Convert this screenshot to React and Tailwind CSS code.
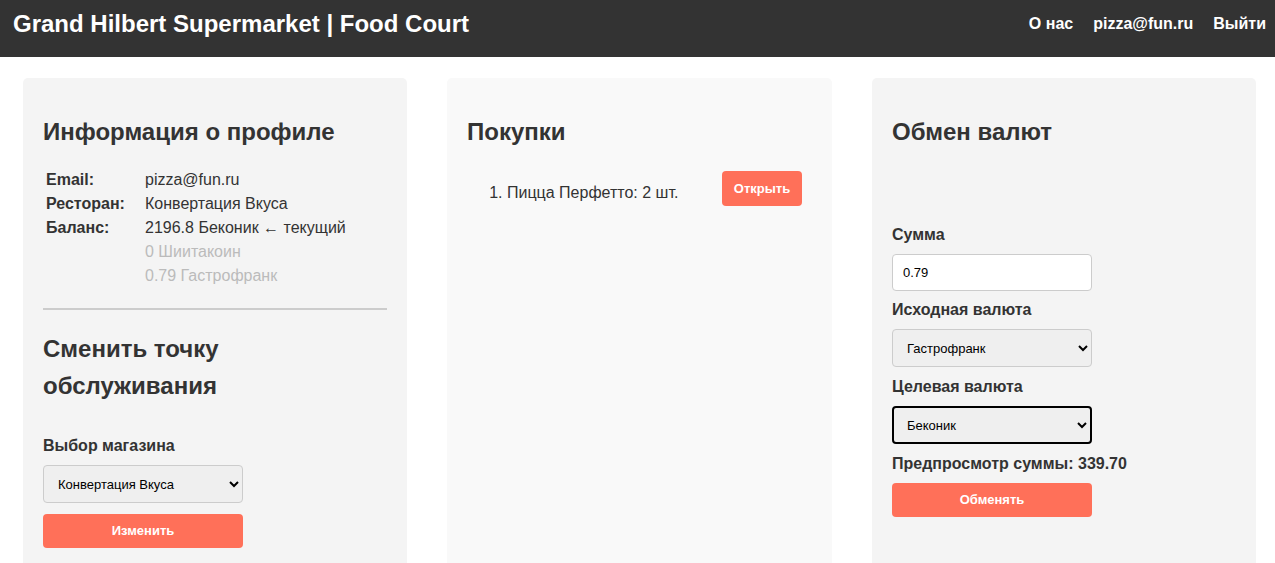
import React from 'react';

/**
 * Food court profile page
 * Header bar + three cards: profile, purchases, currency exchange
 */

const font = { fontFamily: '"Liberation Sans", Arial, sans-serif' };

const Header = () => (
  <header className="bg-[#333333] h-[57px] flex items-center justify-between pl-[13px] pr-[9px] pb-[10px] text-white">
    <h1 className="text-[24px] font-bold leading-none">Grand Hilbert Supermarket | Food Court</h1>
    <nav className="flex items-center gap-[20px] text-[16px] font-bold">
      <a href="#">О нас</a>
      <a href="#">pizza@fun.ru</a>
      <a href="#">Выйти</a>
    </nav>
  </header>
);

const Card = ({ light, wide, children }) => (
  <section
    className={`rounded-[5px] p-[20px] ${wide ? 'w-[385px]' : 'w-[384px]'} ${light ? 'bg-[#f9f9f9]' : 'bg-[#f4f4f4]'}`}
  >
    {children}
  </section>
);

const Title = ({ children, className = '' }) => (
  <h2 className={`text-[24px] leading-[36px] font-bold text-[#333333] ${className}`}>{children}</h2>
);

const Label = ({ children, className = '' }) => (
  <div className={`text-[16px] leading-[24px] font-bold text-[#333333] ${className}`}>{children}</div>
);

const Select = ({ value, options, focused }) => (
  <select
    defaultValue={value}
    className={`block w-[200px] h-[38px] pr-[4px] text-[13px] text-black bg-[#efefef] rounded-[4px] ${
      focused ? 'pl-[9px] border-2 border-black' : 'pl-[10px] border border-[#cccccc]'
    }`}
  >
    {options.map((o) => (
      <option key={o}>{o}</option>
    ))}
  </select>
);

const Button = ({ children, className = '' }) => (
  <button className={`h-[34px] rounded-[4px] bg-[#ff7059] text-white text-[13px] font-bold ${className}`}>
    {children}
  </button>
);

const ProfileCard = () => (
  <Card>
    <Title className="mt-[16px]">Информация о профиле</Title>
    <div className="mt-[18px] pl-[3px] text-[16px] leading-[24px] text-[#333333] grid grid-cols-[99px_1fr]">
      <span className="font-bold">Email:</span>
      <span>pizza@fun.ru</span>
      <span className="font-bold">Ресторан:</span>
      <span>Конвертация Вкуса</span>
      <span className="font-bold">Баланс:</span>
      <span>2196.8 Беконик ← текущий</span>
      <span />
      <span className="text-[#bbbbbb]">0 Шиитакоин</span>
      <span />
      <span className="text-[#bbbbbb]">0.79 Гастрофранк</span>
    </div>
    <hr className="mt-[20px] border-0 h-[2px] bg-[#cccccc]" />
    <Title className="mt-[20px] leading-[37px]">
      Сменить точку
      <br />
      обслуживания
    </Title>
    <Label className="mt-[30px]">Выбор магазина</Label>
    <div className="mt-[7px]">
      <Select value="Конвертация Вкуса" options={['Конвертация Вкуса', 'Пицца Перфетто']} />
    </div>
    <Button className="mt-[11px] w-[200px]">Изменить</Button>
  </Card>
);

const PurchasesCard = () => (
  <Card light wide>
    <Title className="mt-[16px]">Покупки</Title>
    <ol className="list-decimal pl-[40px] mt-[21px] text-[16px] leading-[24px] text-[#333333]">
      <li>
        <div className="flex items-start justify-between pr-[10px]">
          <span className="pt-[10px]">Пицца Перфетто: 2 шт.</span>
          <Button className="w-[80px] h-[35px]">Открыть</Button>
        </div>
      </li>
    </ol>
  </Card>
);

const ExchangeCard = () => (
  <Card>
    <Title className="mt-[16px]">Обмен валют</Title>
    <Label className="mt-[73px]">Сумма</Label>
    <input
      defaultValue="0.79"
      className="mt-[7px] block w-[200px] h-[37px] px-[10px] text-[13px] text-black bg-white border border-[#cccccc] rounded-[4px]"
    />
    <Label className="mt-[7px]">Исходная валюта</Label>
    <div className="mt-[7px]">
      <Select value="Гастрофранк" options={['Гастрофранк', 'Беконик', 'Шиитакоин']} />
    </div>
    <Label className="mt-[8px]">Целевая валюта</Label>
    <div className="mt-[7px]">
      <Select value="Беконик" options={['Беконик', 'Гастрофранк', 'Шиитакоин']} focused />
    </div>
    <Label className="mt-[8px]">Предпросмотр суммы: 339.70</Label>
    <Button className="mt-[7px] w-[200px]">Обменять</Button>
  </Card>
);

export default function App() {
  return (
    <div className="min-h-screen bg-white" style={font}>
      <Header />
      <main className="flex items-stretch gap-[40px] pl-[23px] pt-[21px]">
        <ProfileCard />
        <PurchasesCard />
        <ExchangeCard />
      </main>
    </div>
  );
}
